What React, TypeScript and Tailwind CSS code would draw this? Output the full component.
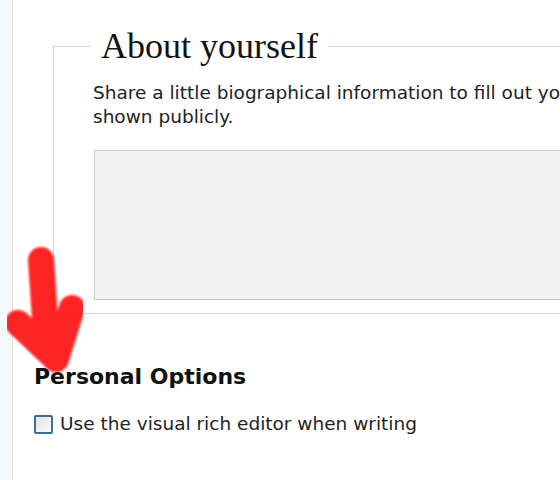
import React from "react";

export default function App() {
  return (
    <div className="relative w-[560px] h-[480px] overflow-hidden bg-white flex">
      <div className="w-[13px] h-full bg-[#f4f9fd] border-r border-[#dcdcdc] shrink-0" />
      <div className="flex-1 pl-[21px] pt-[28px] font-['DejaVu_Sans',sans-serif] text-[#333]">
        <fieldset className="ml-[19px] w-[600px] border border-[#d6d6d6] pl-[39px] pr-[10px] pb-[13px] m-0">
          <legend className="px-[10px] ml-[-2px] font-['Liberation_Serif',serif] text-[36px] leading-[36px] text-[#111]">
            About yourself
          </legend>
          <p className="mt-[17px] text-[18.5px] leading-[24px] text-[#222] whitespace-nowrap">
            Share a little biographical information to fill out your profile.
            <br />
            shown publicly.
          </p>
          <div className="mt-[21px] ml-[1px] h-[150px] w-[540px] border border-[#c8c8c8] bg-[#f2f2f2]" />
        </fieldset>
        <h3 className="mt-[49px] font-bold text-[22px] leading-[28px] text-[#111]">Personal Options</h3>
        <label className="mt-[21px] flex items-center gap-[7px] text-[18.5px] leading-[24px] text-[#222]">
          <span className="w-[19px] h-[19px] border-2 border-[#3d6e94] bg-gradient-to-br from-[#e2e2e2] to-[#fbfbfb] rounded-[2px]" />
          Use the visual rich editor when writing
        </label>
      </div>
      <svg
        className="absolute left-0 top-[240px] pointer-events-none"
        width="100"
        height="140"
        viewBox="0 0 100 140"
      >
        <defs>
          <filter id="soft" x="-20%" y="-20%" width="140%" height="140%">
            <feGaussianBlur stdDeviation="1.2" />
          </filter>
        </defs>
        <g
          stroke="#ff0a0a"
          strokeWidth="26"
          strokeLinecap="round"
          strokeLinejoin="round"
          fill="none"
          opacity="0.9"
          filter="url(#soft)"
        >
          <path d="M41 20 L47 108" />
          <path d="M18 83 L56 119" />
          <path d="M72 68 L56 119" />
        </g>
      </svg>
    </div>
  );
}
